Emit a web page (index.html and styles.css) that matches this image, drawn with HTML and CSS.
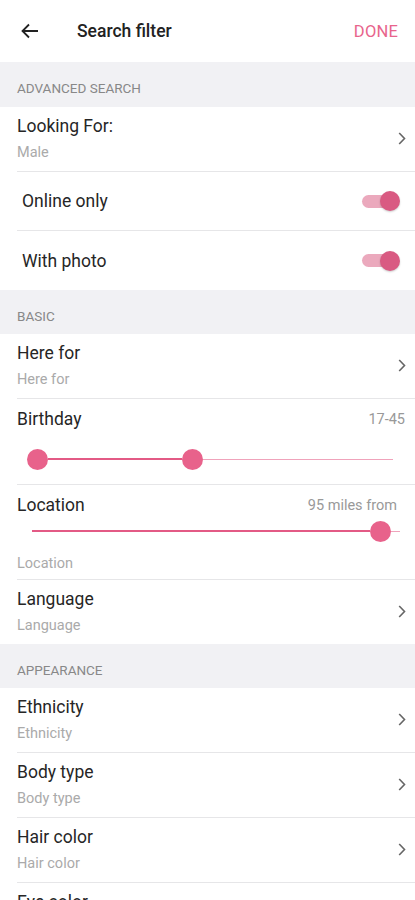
FILE: index.html
```html
<!DOCTYPE html>
<html lang="en">
<head>
  <meta charset="UTF-8">
  <meta name="viewport" content="width=device-width, initial-scale=1.0">
  <title>Search filter</title>
  <link rel="stylesheet" href="styles.css">
</head>
<body>
  <header class="top-bar">
    <svg class="back" width="18" height="16" viewBox="0 0 18 16">
      <path d="M17 8H2M8 1.5L1.5 8L8 14.5" fill="none" stroke="#222" stroke-width="1.8"/>
    </svg>
    <span class="title">Search filter</span>
    <span class="done">DONE</span>
  </header>

  <div class="section first">Advanced search</div>
  <div class="row">
    <div class="text">
      <div class="label">Looking For:</div>
      <div class="sub">Male</div>
    </div>
    <svg class="chevron" width="8" height="13" viewBox="0 0 8 13"><path d="M1.2 1L6.5 6.5L1.2 12" fill="none" stroke="#666" stroke-width="1.6"/></svg>
  </div>
  <div class="row switch-row">
    <div class="label">Online only</div>
    <span class="switch"><span class="knob"></span></span>
  </div>
  <div class="row switch-row last">
    <div class="label">With photo</div>
    <span class="switch"><span class="knob"></span></span>
  </div>

  <div class="section">Basic</div>
  <div class="row">
    <div class="text">
      <div class="label">Here for</div>
      <div class="sub">Here for</div>
    </div>
    <svg class="chevron" width="8" height="13" viewBox="0 0 8 13"><path d="M1.2 1L6.5 6.5L1.2 12" fill="none" stroke="#666" stroke-width="1.6"/></svg>
  </div>
  <div class="row range-row">
    <div class="range-head">
      <div class="label">Birthday</div>
      <div class="value">17-45</div>
    </div>
    <div class="slider birthday">
      <span class="thumb"></span>
      <span class="fill" style="width:134px"></span>
      <span class="thumb"></span>
      <span class="rest"></span>
    </div>
  </div>
  <div class="row range-row">
    <div class="range-head inset">
      <div class="label">Location</div>
      <div class="value">95 miles from</div>
    </div>
    <div class="slider distance">
      <span class="fill" style="width:338px"></span>
      <span class="thumb"></span>
      <span class="rest"></span>
    </div>
    <div class="sub loc">Location</div>
  </div>
  <div class="row last">
    <div class="text">
      <div class="label">Language</div>
      <div class="sub">Language</div>
    </div>
    <svg class="chevron" width="8" height="13" viewBox="0 0 8 13"><path d="M1.2 1L6.5 6.5L1.2 12" fill="none" stroke="#666" stroke-width="1.6"/></svg>
  </div>

  <div class="section">Appearance</div>
  <div class="row">
    <div class="text">
      <div class="label">Ethnicity</div>
      <div class="sub">Ethnicity</div>
    </div>
    <svg class="chevron" width="8" height="13" viewBox="0 0 8 13"><path d="M1.2 1L6.5 6.5L1.2 12" fill="none" stroke="#666" stroke-width="1.6"/></svg>
  </div>
  <div class="row">
    <div class="text">
      <div class="label">Body type</div>
      <div class="sub">Body type</div>
    </div>
    <svg class="chevron" width="8" height="13" viewBox="0 0 8 13"><path d="M1.2 1L6.5 6.5L1.2 12" fill="none" stroke="#666" stroke-width="1.6"/></svg>
  </div>
  <div class="row">
    <div class="text">
      <div class="label">Hair color</div>
      <div class="sub">Hair color</div>
    </div>
    <svg class="chevron" width="8" height="13" viewBox="0 0 8 13"><path d="M1.2 1L6.5 6.5L1.2 12" fill="none" stroke="#666" stroke-width="1.6"/></svg>
  </div>
  <div class="row">
    <div class="text">
      <div class="label">Eye color</div>
      <div class="sub">Eye color</div>
    </div>
    <svg class="chevron" width="8" height="13" viewBox="0 0 8 13"><path d="M1.2 1L6.5 6.5L1.2 12" fill="none" stroke="#666" stroke-width="1.6"/></svg>
  </div>
</body>
</html>
```

FILE: styles.css
```css
body {
  margin: 0;
  font-family: Roboto, "Noto Sans", sans-serif;
  background-color: #fff;
  color: #222;
}
.top-bar {
  height: 62px;
  display: flex;
  align-items: center;
  padding: 0 17px 0 21px;
}
.title {
  margin-left: 38px;
  font-size: 17.5px;
  font-weight: 500;
  color: #222;
  flex: 1;
}
.done {
  font-size: 16.5px;
  color: #e8648c;
  letter-spacing: 0.2px;
}
.section {
  background-color: #f1f1f4;
  height: 44px;
  box-sizing: border-box;
  padding: 19px 17px 0;
  font-size: 13.5px;
  line-height: 14px;
  text-transform: uppercase;
  color: #888;
}
.section.first {
  height: 45px;
}
.row {
  margin-left: 17px;
  padding: 7px 9px 9px 0;
  border-bottom: 1px solid #e6e6e8;
  display: flex;
  align-items: center;
}
.row.last {
  border-bottom: none;
}
.text {
  flex: 1;
}
.label {
  font-size: 17.5px;
  line-height: 24px;
  color: #262626;
}
.sub {
  font-size: 14.5px;
  line-height: 18px;
  color: #aaa;
  margin-top: 6px;
}
.switch-row {
  height: 59px;
  box-sizing: border-box;
  padding: 0 18px 0 5px;
  justify-content: space-between;
}
.switch {
  width: 35px;
  height: 13px;
  border-radius: 7px;
  background-color: #eba9bd;
  display: flex;
  align-items: center;
  justify-content: flex-end;
}
.knob {
  width: 20px;
  height: 20px;
  border-radius: 50%;
  background-color: #d95a82;
  box-shadow: 0 1px 2px rgba(0, 0, 0, 0.2);
  margin-right: -3px;
}
.range-row {
  display: block;
  padding: 8px 0 0;
}
.range-head {
  display: flex;
  justify-content: space-between;
  align-items: center;
  padding-right: 10px;
}
.range-head.inset {
  padding-right: 18px;
}
.value {
  font-size: 14.5px;
  color: #999;
}
.slider {
  display: flex;
  align-items: center;
  height: 22px;
}
.slider .thumb {
  width: 21px;
  height: 21px;
  border-radius: 50%;
  background-color: #e8628b;
  flex-shrink: 0;
}
.slider .fill {
  height: 2.5px;
  background-color: #e35a85;
  flex-shrink: 0;
}
.slider .rest {
  height: 1px;
  background-color: #f0a3bb;
  flex: 1;
}
.birthday {
  margin: 17px 22px 14px 10px;
}
.distance {
  margin: 3px 15px 0 15px;
}
.sub.loc {
  margin: 13px 0 6px;
}
```
